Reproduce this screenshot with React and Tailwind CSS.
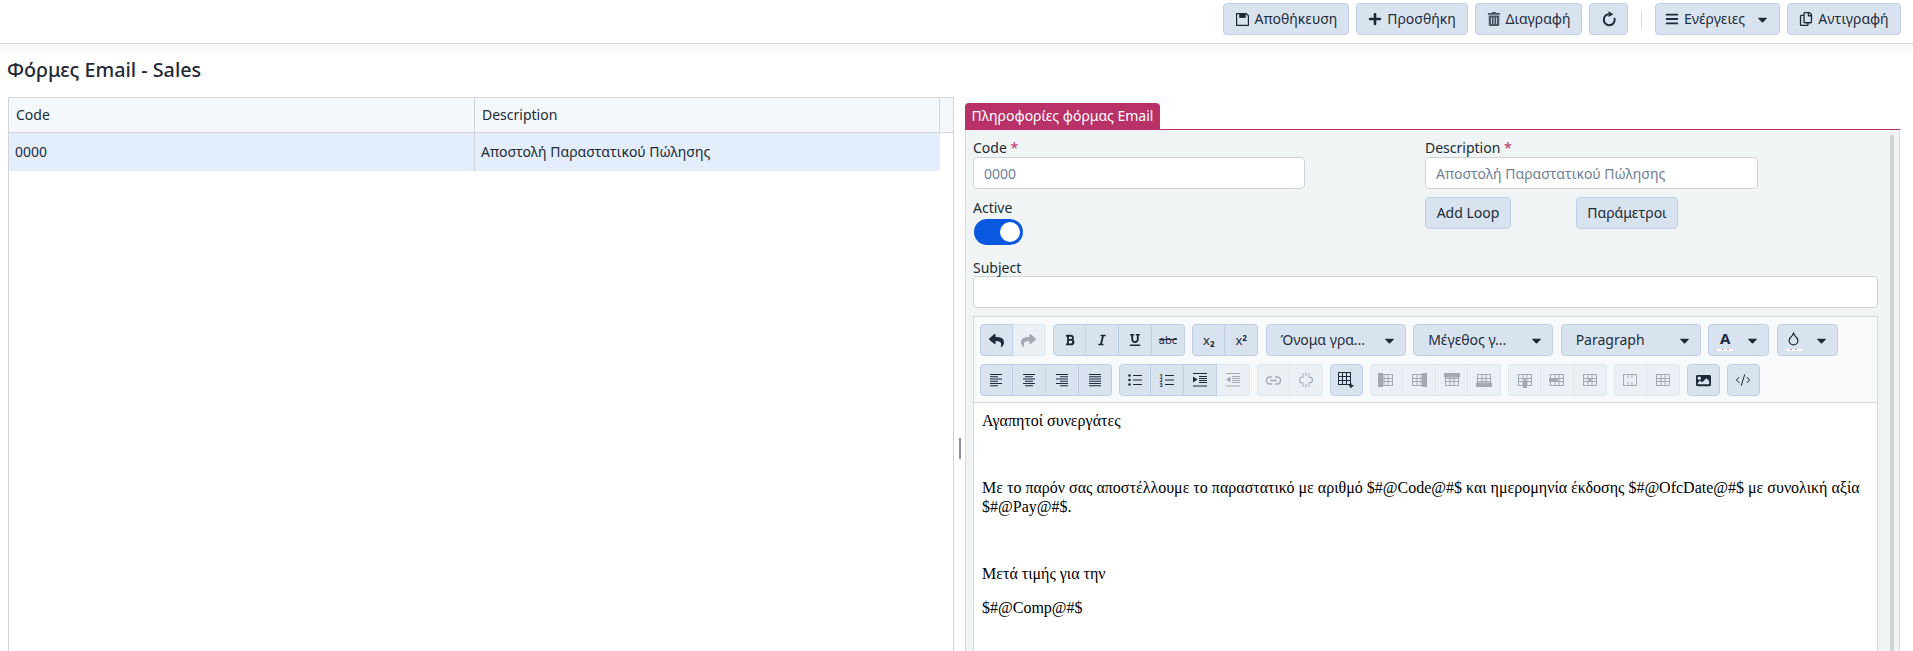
import { Droplet, CodeXml, Link2 } from 'lucide-react'
import { FaPlus, FaTrashAlt, FaBars, FaCaretDown, FaRegCopy, FaReply, FaShare, FaBold, FaItalic, FaUnderline, FaImage } from 'react-icons/fa'

const FONT = { fontFamily: '"Noto Sans", sans-serif' }

function SaveIcon() {
  return (
    <svg width="15" height="15" viewBox="0 0 16 16" fill="none" stroke="currentColor" strokeWidth="1.3">
      <path d="M1.7 1.7h10.3l2.3 2.3v10.3H1.7z" />
      <path d="M4.5 1.7h7v4.6h-7z" fill="currentColor" stroke="none" />
    </svg>
  )
}

function ReloadIcon() {
  return (
    <svg width="16" height="16" viewBox="0 0 16 16" fill="none" stroke="currentColor" strokeWidth="2">
      <path d="M7.5 3.2A5.5 5.5 0 1 0 13.4 6.8" />
      <path d="M7.5 0.3L12.4 3.2L7.5 6.1z" fill="currentColor" stroke="none" />
    </svg>
  )
}

function TopButton({ icon: Icon, label, caret, w, gray }) {
  return (
    <button className={`${w} h-8 flex items-center justify-center gap-[5px] rounded border border-[#bfd0e6] bg-[#d9e3f0] text-sm text-[#1f2d3d]`}>
      <span className={gray ? 'text-[#4b5563]' : 'text-[#1f2937]'}>
        <Icon size={14} />
      </span>
      {label && <span>{label}</span>}
      {caret && <FaCaretDown size={15} className="ml-[5px] text-[#1f2937]" />}
    </button>
  )
}

function Group({ items }) {
  return (
    <div className="flex">
      {items.map((it, i) => (
        <button
          key={i}
          className={[
            'h-8 w-[32.9px] flex items-center justify-center border-y border-r',
            i === 0 ? 'border-l rounded-l' : '',
            i === items.length - 1 ? 'rounded-r' : '',
            it.off
              ? 'bg-[#ebf0f5] border-[#dde6f1] text-[#a3a9b0]'
              : 'bg-[#d9e3f0] border-[#bfd0e6] text-[#1f2937]',
          ].join(' ')}
        >
          {it.node}
        </button>
      ))}
    </div>
  )
}

function Select({ label, w }) {
  return (
    <button className={`${w} h-8 flex items-center justify-between pl-[14px] pr-[8px] rounded border border-[#bfd0e6] bg-[#d9e3f0] text-sm text-[#1f2d3d]`}>
      <span>{label}</span>
      <FaCaretDown size={15} className="text-[#1f2937]" />
    </button>
  )
}

function ColorPick({ children }) {
  return (
    <button className="w-[61px] h-8 flex items-center justify-between pl-[8px] pr-[8px] rounded border border-[#bfd0e6] bg-[#d9e3f0] text-[#1f2937]">
      <span className="relative w-[16px] h-[22px] flex items-center justify-center">
        {children}
        <span className="absolute left-0 right-0 bottom-0 h-[2px] bg-white flex justify-center gap-[3px]">
          <span className="w-[2px] h-[1px] bg-[#e88]" />
          <span className="w-[2px] h-[1px] bg-[#e88]" />
        </span>
      </span>
      <FaCaretDown size={15} />
    </button>
  )
}

function LineIcon({ d, children }) {
  return (
    <svg width="16" height="16" viewBox="0 0 16 16" fill="none" stroke="currentColor" strokeWidth="1.1">
      <path d={d} />
      {children}
    </svg>
  )
}

const ALIGN = {
  left: 'M2 2.5h12M2 4.75h8M2 7h12M2 9.25h8M2 11.5h12M2 13.75h8',
  center: 'M2 2.5h12M4 4.75h8M2 7h12M4 9.25h8M2 11.5h12M4 13.75h8',
  right: 'M2 2.5h12M6 4.75h8M2 7h12M6 9.25h8M2 11.5h12M6 13.75h8',
  justify: 'M2 2.5h12M2 4.75h12M2 7h12M2 9.25h12M2 11.5h12M2 13.75h12',
}

function UnlinkIcon() {
  return (
    <LineIcon d="M6 5H4.5a3 3 0 0 0 0 6H6M10 5h1.5a3 3 0 0 1 0 6H10M8 0.5v3M8 12.5v3M4.5 1.5l1.2 2M11.5 1.5l-1.2 2M4.5 14.5l1.2-2M11.5 14.5l-1.2-2" />
  )
}

// small grid icons of the table tools: bars are the thick grey parts, cross marks a delete
function GridIcon({ bar, cross, plain, plus }) {
  return (
    <svg width="16" height="16" viewBox="0 0 16 16" fill="none" stroke="currentColor" strokeWidth="1">
      <rect x={plus ? 0.5 : 1.5} y={plus ? 0.5 : 2.5} width={plus ? 12 : 13} height={plus ? 12 : 11} />
      {plus ? (
        <path d="M4.5 1v12M8.5 1v12M1 4.5h12M1 8.5h12" />
      ) : (
        <path d="M6 3v10M10 3v10M2 6.5h12M2 9.5h12" />
      )}
      {plus && <path d="M13 11.5v4.5M11 13.8h4.5" strokeWidth="1.4" />}
      {bar === 'left' && <rect x="0" y="1" width="5" height="14" fill="currentColor" stroke="none" />}
      {bar === 'right' && <rect x="11" y="1" width="5" height="14" fill="currentColor" stroke="none" />}
      {bar === 'top' && <rect x="0" y="1" width="16" height="4.5" fill="currentColor" stroke="none" />}
      {bar === 'bottom' && <rect x="0" y="10.5" width="16" height="4.5" fill="currentColor" stroke="none" />}
      {bar === 'midc' && <rect x="6" y="9" width="4" height="7" fill="currentColor" stroke="none" />}
      {bar === 'midr' && <rect x="0" y="6" width="9" height="4" fill="currentColor" stroke="none" />}
      {cross && <path d="M6 6l4 4M10 6l-4 4" />}
      {plain === 'merge' && <rect x="2" y="6" width="12" height="4" fill="#ebf0f5" stroke="none" />}
    </svg>
  )
}

function Field({ label, required, children }) {
  return (
    <div className="flex flex-col">
      <label className="h-[21px] text-sm leading-[23px] text-[#212b36]">
        {label} {required && <span className="text-[#b83268]">*</span>}
      </label>
      {children}
    </div>
  )
}

const inputCls = 'h-8 rounded border border-[#d0d3d6] bg-white px-[10px] text-sm placeholder-[#6f7f96] outline-none'

const row1 = [
  [{ node: <FaReply size={15} /> }, { node: <FaShare size={15} />, off: true }],
  [
    { node: <FaBold size={12} /> },
    { node: <FaItalic size={12} /> },
    { node: <FaUnderline size={12} /> },
    { node: <span className="text-[11px] line-through">abc</span> },
  ],
  [
    { node: <span className="text-[13px] leading-none">x<sub className="text-[8px] font-bold">2</sub></span> },
    { node: <span className="text-[13px] leading-none">x<sup className="text-[8px] font-bold">2</sup></span> },
  ],
]

const row2 = [
  [
    { node: <LineIcon d={ALIGN.left} /> },
    { node: <LineIcon d={ALIGN.center} /> },
    { node: <LineIcon d={ALIGN.right} /> },
    { node: <LineIcon d={ALIGN.justify} /> },
  ],
  [
    {
      node: (
        <LineIcon d="M6 3.5h9M6 8h9M6 12.5h9">
          <circle cx="2.5" cy="3.5" r="1.3" fill="currentColor" stroke="none" />
          <circle cx="2.5" cy="8" r="1.3" fill="currentColor" stroke="none" />
          <circle cx="2.5" cy="12.5" r="1.3" fill="currentColor" stroke="none" />
        </LineIcon>
      ),
    },
    {
      node: (
        <LineIcon d="M6 3.5h9M6 8h9M6 12.5h9">
          <text x="0.5" y="5.5" fontSize="5.5" fontWeight="700" fill="currentColor" stroke="none">1</text>
          <text x="0.5" y="10" fontSize="5.5" fontWeight="700" fill="currentColor" stroke="none">2</text>
          <text x="0.5" y="14.5" fontSize="5.5" fontWeight="700" fill="currentColor" stroke="none">3</text>
        </LineIcon>
      ),
    },
    {
      node: (
        <LineIcon d="M1 1.5h14M7 4.5h8M7 6.5h8M7 8.5h8M7 10.5h8M1 14h14">
          <path d="M1 4.5l4.5 3-4.5 3z" fill="currentColor" stroke="none" />
        </LineIcon>
      ),
    },
    {
      node: (
        <LineIcon d="M1 1.5h14M7 4.5h8M7 6.5h8M7 8.5h8M7 10.5h8M1 14h14">
          <path d="M5.5 4.5l-4.5 3 4.5 3z" fill="currentColor" stroke="none" />
        </LineIcon>
      ),
      off: true,
    },
  ],
  [{ node: <Link2 size={17} />, off: true }, { node: <UnlinkIcon />, off: true }],
  [{ node: <GridIcon plus /> }],
  [
    { node: <GridIcon bar="left" />, off: true },
    { node: <GridIcon bar="right" />, off: true },
    { node: <GridIcon bar="top" />, off: true },
    { node: <GridIcon bar="bottom" />, off: true },
  ],
  [
    { node: <GridIcon bar="midc" cross />, off: true },
    { node: <GridIcon bar="midr" cross />, off: true },
    { node: <GridIcon cross />, off: true },
  ],
  [{ node: <GridIcon plain="merge" />, off: true }, { node: <GridIcon />, off: true }],
  [{ node: <FaImage size={15} /> }],
  [{ node: <CodeXml size={16} strokeWidth={1.5} /> }],
]

export default function App() {
  return (
    <div style={FONT} className="h-[651px] w-full overflow-hidden bg-white text-[#212b36]">
      {/* Top bar */}
      <div className="h-[44px] border-b border-[#d9d9d9] flex items-start justify-end gap-[7px] pt-[3px] pr-[12px]">
        <TopButton icon={SaveIcon} label="Αποθήκευση" w="w-[126px]" />
        <TopButton icon={FaPlus} label="Προσθήκη" w="w-[112px]" />
        <TopButton icon={FaTrashAlt} label="Διαγραφή" w="w-[107px]" gray />
        <TopButton icon={ReloadIcon} w="w-[39px]" />
        <div className="mx-[6px] mt-[8px] h-[18px] w-px bg-[#d5dbe2]" />
        <TopButton icon={FaBars} label="Ενέργειες" caret w="w-[125px]" />
        <TopButton icon={FaRegCopy} label="Αντιγραφή" w="w-[114px]" />
      </div>

      {/* Title */}
      <div className="h-[53px]">
        <div className="h-[12px] bg-gradient-to-b from-[#f6f6f6] to-white" />
        <h1 className="pl-[7px] text-[19.75px] leading-[28px] font-medium text-[#1f2937]">Φόρμες Email - Sales</h1>
      </div>

      <div className="flex pl-[8px]">
        {/* Left grid */}
        <div className="w-[946px] h-[570px] shrink-0 border border-[#d4d4d4] text-sm">
          <div className="flex h-[35px] items-center bg-[#f4f8fb] border-b border-[#d4d4d4]">
            <div className="w-[466px] h-full flex items-center pl-[7px] border-r border-[#d4d4d4]">Code</div>
            <div className="w-[465px] h-full flex items-center pl-[7px] border-r border-[#d4d4d4]">Description</div>
          </div>
          <div className="flex h-[38px] items-center w-[931px] bg-[#e3edfb]">
            <div className="w-[466px] h-full flex items-center pl-[6px] border-r border-[#d4d4d4]">0000</div>
            <div className="flex-1 pl-[6px]">Αποστολή Παραστατικού Πώλησης</div>
          </div>
        </div>

        {/* Splitter */}
        <div className="w-[11px] shrink-0 flex justify-center">
          <div className="mt-[341px] h-[21px] w-[2px] bg-[#8a94a3]" />
        </div>

        {/* Right panel */}
        <div className="w-[935px] shrink-0 mt-[6px] text-sm">
          <div className="h-[27px] border-b border-[#b83268]">
            <div className="w-[195px] h-[26px] rounded-t bg-[#b83268] text-white flex items-center justify-center text-sm">
              Πληροφορίες φόρμας Email
            </div>
          </div>
          <div className="relative h-[522px] overflow-hidden bg-[#f0f4f5] border-x border-[#d9dcdc] pl-[7px] pt-[6px]">
            <div className="absolute right-[5px] top-[5px] bottom-0 w-[4px] bg-[#cfd3d3]" />
            <div className="w-[905px]">
              <div className="grid grid-cols-[452px_1fr] h-[118px]">
                <div className="flex flex-col">
                  <Field label="Code" required>
                    <input readOnly placeholder="0000" className={`${inputCls} w-[332px]`} />
                  </Field>
                  <label className="mt-[8px] h-[21px] leading-[21px]">Active</label>
                  <button className="mt-[1px] w-[49px] h-[26px] ml-[1px] rounded-full bg-[#0a57e0] flex items-center justify-end pr-[3px]">
                    <span className="w-[20px] h-[20px] rounded-full bg-white" />
                  </button>
                </div>
                <div className="flex flex-col">
                  <Field label="Description" required>
                    <input readOnly placeholder="Αποστολή Παραστατικού Πώλησης" className={`${inputCls} w-[333px]`} />
                  </Field>
                  <div className="mt-[8px] flex gap-[65px]">
                    <button className="w-[86px] h-8 rounded border border-[#bfd0e6] bg-[#d9e3f0]">Add Loop</button>
                    <button className="w-[102px] h-8 rounded border border-[#bfd0e6] bg-[#d9e3f0]">Παράμετροι</button>
                  </div>
                </div>
              </div>

              <label className="block h-[20px] leading-[24px] mt-[2px]">Subject</label>
              <input readOnly className={`${inputCls} w-full block`} />

              {/* Editor */}
              <div className="mt-[8px] border border-[#d4d8dc] bg-white">
                <div className="bg-[#f8f9fb] border-b border-[#d4d8dc] px-[6px] pt-[7px] pb-[6px] flex flex-col gap-2">
                  <div className="flex gap-[7.5px]">
                    {row1.map((g, i) => <Group key={i} items={g} />)}
                    <Select label="Όνομα γρα..." w="w-[140px]" />
                    <Select label="Μέγεθος γ..." w="w-[140px]" />
                    <Select label="Paragraph" w="w-[140px]" />
                    <ColorPick><span className="text-[15px] font-bold leading-none -mt-[4px]">A</span></ColorPick>
                    <ColorPick><Droplet size={15} className="-mt-[3px]" /></ColorPick>
                  </div>
                  <div className="flex gap-[7px]">
                    {row2.map((g, i) => <Group key={i} items={g} />)}
                  </div>
                </div>
                <div
                  style={{ fontFamily: '"Liberation Serif", serif' }}
                  className="px-[8px] pt-[8px] h-[300px] text-[16px] leading-[19px] text-black"
                >
                  <p className="mb-[14.5px]">Αγαπητοί συνεργάτες</p>
                  <p className="mb-[14.5px]"><br /></p>
                  <p className="mb-[14.5px]">
                    Με το παρόν σας αποστέλλουμε το παραστατικό με αριθμό $#@Code@#$ και ημερομηνία έκδοσης $#@OfcDate@#$ με συνολική αξία $#@Pay@#$.
                  </p>
                  <p className="mb-[14.5px]"><br /></p>
                  <p className="mb-[14.5px]">Μετά τιμής για την</p>
                  <p className="mb-[14.5px]">$#@Comp@#$</p>
                </div>
              </div>
            </div>
          </div>
        </div>
      </div>
    </div>
  )
}
